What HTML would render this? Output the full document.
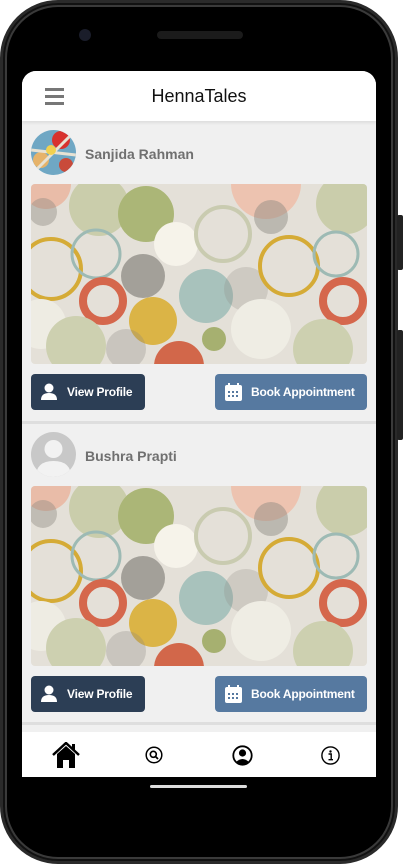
<!DOCTYPE html>
<html><head><meta charset="utf-8"><style>
*{margin:0;padding:0;box-sizing:border-box}
body{width:403px;height:864px;background:#fff;position:relative;overflow:hidden;font-family:"Liberation Sans",Roboto,sans-serif}
.phone{position:absolute;left:0;top:0;width:398px;height:864px;background:#000;border-radius:58px;border:3px solid #2a2a2a;box-shadow:inset 0 0 0 2px #111, inset 0 0 0 4px #3a3a3a}
.btn-side{position:absolute;right:0;width:6px;background:#222;border-radius:2px}
.screen{position:absolute;left:22px;top:71px;width:354px;height:706px;background:#f0f0f0;border-radius:14px 14px 0 0;overflow:hidden}
.header{height:50px;background:#fff;position:relative;box-shadow:0 2px 3px rgba(0,0,0,.08)}
.ham{position:absolute;left:23px;top:17px;width:19px}
.ham i{display:block;height:3px;background:#777;margin-bottom:4px}
.title{position:absolute;left:0;right:0;top:15px;text-align:center;font-size:18px;color:#111}
.card{position:absolute;left:0;width:354px}
.av{position:absolute;left:9px;width:45px;height:45px;border-radius:50%;overflow:hidden}
.name{position:absolute;left:63px;font-size:14px;font-weight:bold;color:#707070}
.img{position:absolute;left:9px;width:336px;height:180px;border-radius:4px;overflow:hidden}
.b{position:absolute;height:36px;border-radius:4px;color:#fff;font-weight:bold;font-size:12px;letter-spacing:-0.2px;display:flex;align-items:center}
.vp{left:9px;width:114px;background:#2c3e55}
.ba{left:193px;width:152px;background:#5679a0}
.div{position:absolute;left:0;width:354px;height:3px;background:#dedede}
.nav{position:absolute;left:0;top:661px;width:354px;height:45px;background:#fff}
.nav svg{position:absolute}
</style></head><body>
<div class="phone"></div>
<div class="btn-side" style="top:215px;height:55px"></div>
<div class="btn-side" style="top:330px;height:110px"></div>
<div style="position:absolute;left:79px;top:29px;width:12px;height:12px;border-radius:50%;background:#1a1d2a"></div>
<div style="position:absolute;left:157px;top:31px;width:86px;height:8px;border-radius:4px;background:#1b1b1b"></div>
<div style="position:absolute;left:150px;top:785px;width:97px;height:3px;border-radius:2px;background:#ddd"></div>

<div class="screen">
 <div class="header"><div class="ham"><i></i><i></i><i></i></div><div class="title">HennaTales</div></div>

 <div class="card" style="top:59px">
  <div class="av" style="top:0"><svg width="45" height="45"><rect width="45" height="45" fill="#6fa7c4"/><circle cx="30" cy="10" r="9" fill="#d8322e"/><circle cx="10" cy="30" r="8" fill="#e6b36a"/><circle cx="35" cy="35" r="7" fill="#c94a3a"/><path d="M0 20 L45 25 M5 40 L40 5" stroke="#e8e2d3" stroke-width="3"/><circle cx="20" cy="20" r="5" fill="#f1d150"/></svg></div>
  <div class="name" style="top:16px">Sanjida Rahman</div>
 </div>
 <div class="img" style="top:113px"><svg width="336" height="180" viewBox="0 0 336 180">
  <rect width="336" height="180" fill="#e4e0d8"/>
  <circle cx="15" cy="0" r="25" fill="#e9bca8"/>
  <circle cx="68" cy="22" r="30" fill="#cacdab"/>
  <circle cx="115" cy="30" r="28" fill="#abb677"/>
  <circle cx="145" cy="60" r="22" fill="#f6f3ea"/>
  <circle cx="192" cy="50" r="27" fill="none" stroke="#c9cbb0" stroke-width="4"/>
  <circle cx="235" cy="0" r="35" fill="#edc3b0"/>
  <circle cx="240" cy="33" r="17" fill="#8a8880" opacity=".45"/>
  <circle cx="12" cy="28" r="14" fill="#8a8880" opacity=".4"/>
  <circle cx="315" cy="20" r="30" fill="#cacdab"/>
  <circle cx="20" cy="85" r="30" fill="none" stroke="#d5ab36" stroke-width="4"/>
  <circle cx="65" cy="70" r="24" fill="none" stroke="#9dbab4" stroke-width="3"/>
  <circle cx="112" cy="92" r="22" fill="#55534e" opacity=".45"/>
  <circle cx="175" cy="112" r="27" fill="#a8c2bc"/>
  <circle cx="215" cy="105" r="22" fill="#8a8880" opacity=".25"/>
  <circle cx="258" cy="82" r="29" fill="none" stroke="#d5ab36" stroke-width="4"/>
  <circle cx="305" cy="70" r="22" fill="none" stroke="#9dbab4" stroke-width="3"/>
  <circle cx="72" cy="117" r="20" fill="none" stroke="#d5674c" stroke-width="8"/>
  <circle cx="312" cy="117" r="20" fill="none" stroke="#d5674c" stroke-width="8"/>
  <circle cx="122" cy="137" r="24" fill="#dbb446"/>
  <circle cx="230" cy="145" r="30" fill="#efede4"/>
  <circle cx="10" cy="140" r="25" fill="#eeece3"/>
  <circle cx="183" cy="155" r="12" fill="#a6b070"/>
  <circle cx="148" cy="182" r="25" fill="#d2674a"/>
  <circle cx="45" cy="162" r="30" fill="#cdd0b0"/>
  <circle cx="292" cy="165" r="30" fill="#cdd0b0"/>
  <circle cx="95" cy="165" r="20" fill="#8a8880" opacity=".3"/>
 </svg></div>
 <div class="b vp" style="top:303px"><svg width="16" height="18" style="margin:0 10px 0 10px" viewBox="0 0 16 18"><circle cx="8" cy="5" r="4.5" fill="#fff"/><path d="M0 17 Q0 10 8 10 Q16 10 16 17 Z" fill="#fff"/></svg>View Profile</div>
 <div class="b ba" style="top:303px"><svg width="17" height="18" style="margin:0 9px 0 10px" viewBox="0 0 17 18"><rect x="0" y="2" width="17" height="16" rx="2" fill="#fff"/><rect x="3" y="0" width="2" height="4" fill="#fff"/><rect x="12" y="0" width="2" height="4" fill="#fff"/><g fill="#5679a0"><rect x="3" y="8" width="2" height="2"/><rect x="7" y="8" width="2" height="2"/><rect x="11" y="8" width="2" height="2"/><rect x="3" y="12" width="2" height="2"/><rect x="7" y="12" width="2" height="2"/><rect x="11" y="12" width="2" height="2"/></g></svg>Book Appointment</div>
 <div class="div" style="top:350px"></div>

 <div class="card" style="top:361px">
  <div class="av" style="top:0;background:#c8c8c8"><svg width="45" height="45"><circle cx="22.5" cy="17" r="9" fill="#f2f2f2"/><path d="M5 45 Q5 29 22.5 29 Q40 29 40 45 Z" fill="#f2f2f2"/></svg></div>
  <div class="name" style="top:16px">Bushra Prapti</div>
 </div>
 <div class="img" style="top:415px"><svg width="336" height="180" viewBox="0 0 336 180">
  <rect width="336" height="180" fill="#e4e0d8"/>
  <circle cx="15" cy="0" r="25" fill="#e9bca8"/>
  <circle cx="68" cy="22" r="30" fill="#cacdab"/>
  <circle cx="115" cy="30" r="28" fill="#abb677"/>
  <circle cx="145" cy="60" r="22" fill="#f6f3ea"/>
  <circle cx="192" cy="50" r="27" fill="none" stroke="#c9cbb0" stroke-width="4"/>
  <circle cx="235" cy="0" r="35" fill="#edc3b0"/>
  <circle cx="240" cy="33" r="17" fill="#8a8880" opacity=".45"/>
  <circle cx="12" cy="28" r="14" fill="#8a8880" opacity=".4"/>
  <circle cx="315" cy="20" r="30" fill="#cacdab"/>
  <circle cx="20" cy="85" r="30" fill="none" stroke="#d5ab36" stroke-width="4"/>
  <circle cx="65" cy="70" r="24" fill="none" stroke="#9dbab4" stroke-width="3"/>
  <circle cx="112" cy="92" r="22" fill="#55534e" opacity=".45"/>
  <circle cx="175" cy="112" r="27" fill="#a8c2bc"/>
  <circle cx="215" cy="105" r="22" fill="#8a8880" opacity=".25"/>
  <circle cx="258" cy="82" r="29" fill="none" stroke="#d5ab36" stroke-width="4"/>
  <circle cx="305" cy="70" r="22" fill="none" stroke="#9dbab4" stroke-width="3"/>
  <circle cx="72" cy="117" r="20" fill="none" stroke="#d5674c" stroke-width="8"/>
  <circle cx="312" cy="117" r="20" fill="none" stroke="#d5674c" stroke-width="8"/>
  <circle cx="122" cy="137" r="24" fill="#dbb446"/>
  <circle cx="230" cy="145" r="30" fill="#efede4"/>
  <circle cx="10" cy="140" r="25" fill="#eeece3"/>
  <circle cx="183" cy="155" r="12" fill="#a6b070"/>
  <circle cx="148" cy="182" r="25" fill="#d2674a"/>
  <circle cx="45" cy="162" r="30" fill="#cdd0b0"/>
  <circle cx="292" cy="165" r="30" fill="#cdd0b0"/>
  <circle cx="95" cy="165" r="20" fill="#8a8880" opacity=".3"/>
 </svg></div>
 <div class="b vp" style="top:605px"><svg width="16" height="18" style="margin:0 10px 0 10px" viewBox="0 0 16 18"><circle cx="8" cy="5" r="4.5" fill="#fff"/><path d="M0 17 Q0 10 8 10 Q16 10 16 17 Z" fill="#fff"/></svg>View Profile</div>
 <div class="b ba" style="top:605px"><svg width="17" height="18" style="margin:0 9px 0 10px" viewBox="0 0 17 18"><rect x="0" y="2" width="17" height="16" rx="2" fill="#fff"/><rect x="3" y="0" width="2" height="4" fill="#fff"/><rect x="12" y="0" width="2" height="4" fill="#fff"/><g fill="#5679a0"><rect x="3" y="8" width="2" height="2"/><rect x="7" y="8" width="2" height="2"/><rect x="11" y="8" width="2" height="2"/><rect x="3" y="12" width="2" height="2"/><rect x="7" y="12" width="2" height="2"/><rect x="11" y="12" width="2" height="2"/></g></svg>Book Appointment</div>
 <div class="div" style="top:651px"></div>

 <div class="nav">
  <svg style="left:30px;top:10px" width="28" height="26" viewBox="0 0 28 26"><path d="M1 13 L14 1 L27 13" fill="none" stroke="#000" stroke-width="2.5"/><rect x="20" y="2" width="3" height="6" fill="#000"/><path d="M5 12 L14 4 L23 12 L23 26 L17 26 L17 18 L11 18 L11 26 L5 26 Z" fill="#000"/></svg>
  <svg style="left:123px;top:14px" width="18" height="18" viewBox="0 0 18 18"><circle cx="9" cy="9" r="7.8" fill="none" stroke="#000" stroke-width="1.5"/><circle cx="8.3" cy="8.3" r="3" fill="none" stroke="#000" stroke-width="1.6"/><path d="M10.5 10.5 L13 13" stroke="#000" stroke-width="1.8"/></svg>
  <svg style="left:210px;top:13px" width="21" height="21" viewBox="0 0 21 21"><circle cx="10.5" cy="10.5" r="9.2" fill="none" stroke="#000" stroke-width="1.8"/><circle cx="10.5" cy="8" r="3.6" fill="#000"/><path d="M4 17 Q10.5 11 17 17 Q10.5 22 4 17Z" fill="#000"/></svg>
  <svg style="left:299px;top:14px" width="19" height="19" viewBox="0 0 19 19"><circle cx="9.5" cy="9.5" r="8.6" fill="none" stroke="#000" stroke-width="1.4"/><circle cx="9.5" cy="5.5" r="1.2" fill="#000"/><path d="M7.5 8 L10.2 8 L10.2 13.5 M7.5 13.7 L12 13.7" fill="none" stroke="#000" stroke-width="1.4"/></svg>
 </div>
</div>
</body></html>
